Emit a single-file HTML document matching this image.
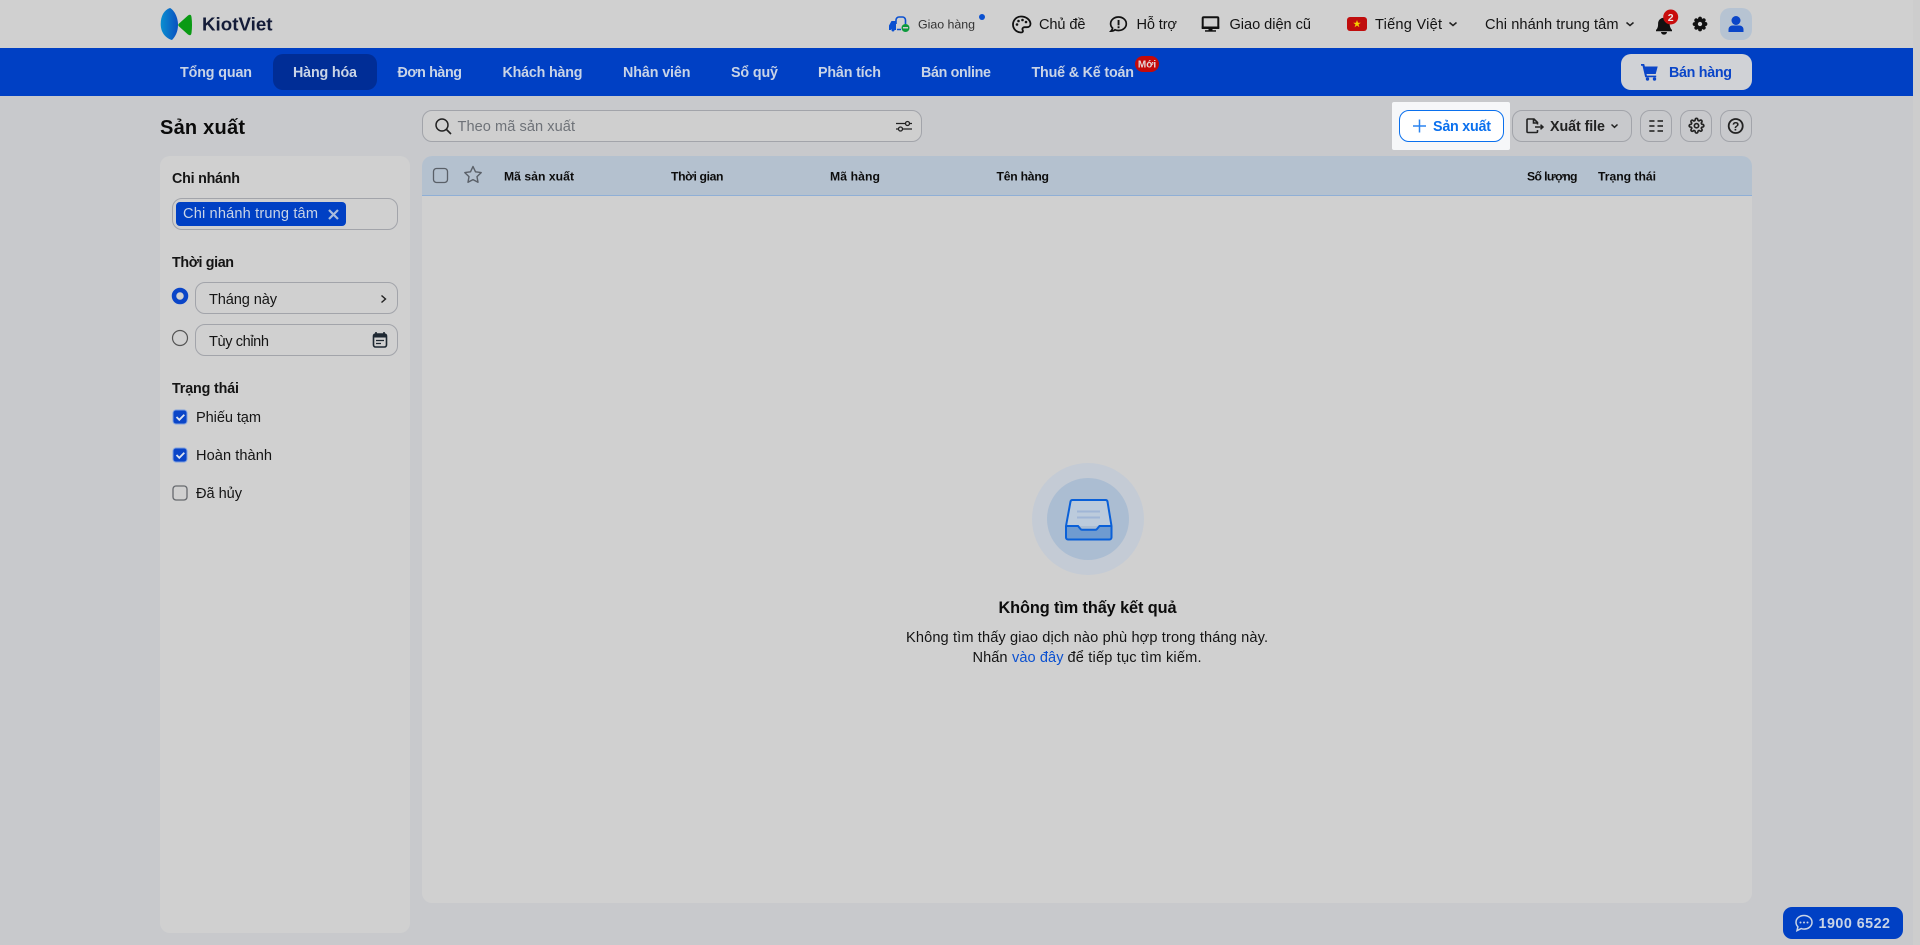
<!DOCTYPE html>
<html lang="vi">
<head>
<meta charset="utf-8">
<title>Sản xuất - KiotViet</title>
<style>
html,body{margin:0;padding:0;width:1920px;height:945px;overflow:hidden;background:#c8c9cc;}
.b{position:absolute;box-sizing:border-box;}
svg{position:absolute;left:0;top:0;}
text{font-family:"Liberation Sans",sans-serif;font-size:14.600px;fill:#141414;}
.bd{font-weight:700;font-size:14.300px;}
.nav{font-weight:700;font-size:14.300px;fill:#c9d4e6;}
.th{font-weight:700;font-size:12.200px;fill:#0c0c0c;}
.inp{border:1px solid #a2a4aa;border-radius:10px;}
.btn{border:1px solid #a2a4aa;border-radius:10px;top:110px;height:32px;}
</style>
</head>
<body>
<div class="b" style="left:0;top:0;width:1913px;height:48px;background:#d0d0d0"></div>
<div class="b" style="left:0;top:48px;width:1913px;height:48px;background:#0040c4"></div>
<div class="b" style="left:1913px;top:0;width:7px;height:945px;background:#cdcdcd"></div>
<div class="b" style="left:273px;top:54px;width:104px;height:36px;background:#002d96;border-radius:10px"></div>
<div class="b" style="left:1621px;top:54px;width:131px;height:36px;background:#d0d2d6;border-radius:10px"></div>
<div class="b" style="left:1720px;top:8px;width:32px;height:32px;background:#b6c3d2;border-radius:10px"></div>
<div class="b" style="left:1135px;top:56px;width:24px;height:16px;background:#c40a0a;border-radius:8px"></div>

<div class="b inp" style="left:422px;top:110px;width:500px;height:32px;background:#cfcfcf"></div>
<div class="b" style="left:1392px;top:102px;width:118px;height:48px;background:#f6f7f9;border-radius:2px"></div>
<div class="b" style="left:1399px;top:110px;width:105px;height:32px;background:#fff;border:1px solid #0a70ee;border-radius:10px"></div>
<div class="b btn" style="left:1512px;width:120px"></div>
<div class="b btn" style="left:1640px;width:32px"></div>
<div class="b btn" style="left:1680px;width:32px"></div>
<div class="b btn" style="left:1720px;width:32px"></div>

<div class="b" style="left:160px;top:156px;width:250px;height:777px;background:#d0d0d0;border-radius:10px"></div>
<div class="b inp" style="left:172px;top:198px;width:226px;height:32px"></div>
<div class="b" style="left:176px;top:202px;width:170px;height:24px;background:#0040c4;border-radius:4px"></div>
<div class="b inp" style="left:195px;top:282px;width:203px;height:32px"></div>
<div class="b inp" style="left:195px;top:324px;width:203px;height:32px"></div>

<div class="b" style="left:422px;top:156px;width:1330px;height:747px;background:#d0d0d0;border-radius:10px"></div>
<div class="b" style="left:422px;top:156px;width:1330px;height:40px;background:#b4c1cf;border-radius:10px 10px 0 0;border-bottom:1px solid #8fafd6"></div>

<div class="b" style="left:1032px;top:463px;width:112px;height:112px;background:#c4cbd5;border-radius:50%"></div>
<div class="b" style="left:1047px;top:478px;width:82px;height:82px;background:#abbdd2;border-radius:50%"></div>

<div class="b" style="left:1783px;top:907px;width:120px;height:32px;background:#0040c4;border-radius:9px"></div>

<svg width="1920" height="945" viewBox="0 0 1920 945" xmlns="http://www.w3.org/2000/svg">
<defs>
<linearGradient id="lg" x1="0" y1="0" x2="1" y2="0"><stop offset="0" stop-color="#0a8fd0"/><stop offset="1" stop-color="#0a50c0"/></linearGradient>
</defs>
<!-- logo -->
<path d="M170 8C174 10 178 17 178 25C178 32 175 37 172 40C165 38 160.700 32 160.700 24C160.700 16 164 10 170 8Z" fill="url(#lg)"/>
<path d="M178.500 24Q178 25 178.500 26L188 34.500Q191 36.500 191.500 33Q192.500 25 191.500 17Q191 13.500 188 15.500Z" fill="#0a9a14"/>
<text x="202" y="30.500" textLength="70.500" lengthAdjust="spacingAndGlyphs" class="bd" style="font-size:18.500px;fill:#141c38">KiotViet</text>

<!-- top utilities -->
<path d="M896 24V20a3 3 0 0 1 3-3h3.500a3 3 0 0 1 3 3v4M897 29.500h4" fill="none" stroke="#0a50d0" stroke-width="1.600"/>
<path d="M889 25.500l2.500-4.500h4.500v9h-1.500a2.200 2.200 0 0 0-3.800 0H889Z" fill="#0a50d0"/>
<circle cx="893" cy="30" r="1.500" fill="#0a50d0"/>
<circle cx="905.500" cy="28" r="4" fill="#0d9a3c"/><rect x="903" y="27" width="5" height="1.500" fill="#d0d0d0"/>
<text x="918" y="28.500" textLength="57" style="font-size:12.400px;fill:#333">Giao hàng</text>
<circle cx="982" cy="17" r="3" fill="#0a50d0"/>

<path d="M1021 16.500a8 8 0 0 0 0 16c1.800 0 2.300-1.200 1.700-2.300-.8-1.500.2-3 1.800-3h2.500c2 0 3.500-1.500 3.500-3.500C1030 19.500 1026 16.500 1021 16.500Z" fill="none" stroke="#111" stroke-width="1.800"/>
<circle cx="1017" cy="24.500" r="1.300" fill="#111"/><circle cx="1018.500" cy="21" r="1.300" fill="#111"/><circle cx="1022.500" cy="20" r="1.300" fill="#111"/><circle cx="1026" cy="22" r="1.300" fill="#111"/>
<text x="1039" y="29" textLength="46.500">Chủ đề</text>

<path d="M1118.500 17c4.500 0 7.800 3 7.800 6.700 0 3.800-3.300 6.800-7.800 6.800-1.300 0-2.500-.2-3.500-.7-1 .8-2.500 1.300-4 1.300 1-1 1.500-2 1.600-3-1.300-1.200-2-2.700-2-4.400 0-3.700 3.400-6.700 7.900-6.700Z" fill="none" stroke="#111" stroke-width="1.700"/>
<rect x="1117.600" y="20" width="1.900" height="5.300" fill="#111"/><rect x="1117.600" y="26.300" width="1.900" height="1.900" fill="#111"/>
<text x="1136.500" y="29" textLength="40.500">Hỗ trợ</text>

<rect x="1202.700" y="17.300" width="15.600" height="10.700" rx="1" fill="none" stroke="#111" stroke-width="2"/>
<rect x="1201.700" y="26.500" width="17.600" height="2.500" fill="#111"/>
<rect x="1208.500" y="28" width="4" height="3" fill="#111"/><rect x="1205" y="30.200" width="11" height="1.500" fill="#111"/>
<text x="1229.500" y="29" textLength="81.500">Giao diện cũ</text>

<rect x="1347" y="17" width="20" height="14" rx="3" fill="#c00d0d"/>
<path d="M1357 20l1 2.700h2.800l-2.300 1.700.9 2.800-2.400-1.700-2.400 1.700.9-2.800-2.300-1.700h2.800Z" fill="#f5d000"/>
<text x="1375" y="29" textLength="67">Tiếng Việt</text>
<path d="M1449.500 22.500l3.500 3 3.500-3" fill="none" stroke="#222" stroke-width="1.500"/>
<text x="1485" y="29" textLength="133.500">Chi nhánh trung tâm</text>
<path d="M1626.500 22.500l3.500 3 3.500-3" fill="none" stroke="#222" stroke-width="1.500"/>

<path d="M1656 30c1.600-1.500 2.100-3.200 2.100-6.500a5.800 5.800 0 0 1 11.600 0c0 3.300.9 5 2.300 6.500v1.200h-16Z" fill="#111"/>
<path d="M1661 32a3 2.600 0 0 0 6 0Z" fill="#111"/>
<circle cx="1670.700" cy="17" r="7.500" fill="#c80d0d"/>
<text x="1670.700" y="21" text-anchor="middle" class="bd" style="font-size:10.500px;fill:#e8e8e8">2</text>

<g transform="translate(1692.800,16.800) scale(.6)">
<path fill="#111" stroke="#111" stroke-width="2.500" d="M19.400 15a1.650 1.650 0 0 0 .33 1.820l.06.06a2 2 0 0 1 0 2.830 2 2 0 0 1-2.830 0l-.06-.06a1.650 1.650 0 0 0-1.820-.33 1.650 1.650 0 0 0-1 1.510V21a2 2 0 0 1-2 2 2 2 0 0 1-2-2v-.09A1.650 1.650 0 0 0 9 19.400a1.650 1.650 0 0 0-1.820.33l-.06.06a2 2 0 0 1-2.830 0 2 2 0 0 1 0-2.830l.06-.06a1.650 1.650 0 0 0 .33-1.820 1.650 1.650 0 0 0-1.510-1H3a2 2 0 0 1-2-2 2 2 0 0 1 2-2h.09A1.650 1.650 0 0 0 4.600 9a1.650 1.650 0 0 0-.33-1.820l-.06-.06a2 2 0 0 1 0-2.830 2 2 0 0 1 2.830 0l.06.06a1.650 1.650 0 0 0 1.820.33H9a1.650 1.650 0 0 0 1-1.510V3a2 2 0 0 1 2-2 2 2 0 0 1 2 2v.09a1.650 1.650 0 0 0 1 1.510 1.650 1.650 0 0 0 1.820-.33l.06-.06a2 2 0 0 1 2.830 0 2 2 0 0 1 0 2.830l-.06.06a1.650 1.650 0 0 0-.33 1.820V9a1.650 1.650 0 0 0 1.510 1H21a2 2 0 0 1 2 2 2 2 0 0 1-2 2h-.09a1.650 1.650 0 0 0-1.510 1z"/>
<circle cx="12" cy="12" r="3.600" fill="#d0d0d0"/>
</g>

<circle cx="1736" cy="20.500" r="4.500" fill="#0a45c8"/>
<path d="M1728.500 32v-2.500c0-2.500 2-4 4-4h7c2 0 4 1.500 4 4V32Z" fill="#0a45c8"/>

<!-- nav -->
<text x="180" y="77" textLength="72" class="nav">Tổng quan</text>
<text x="293" y="77" textLength="64" class="nav">Hàng hóa</text>
<text x="397.500" y="77" textLength="64.500" class="nav">Đơn hàng</text>
<text x="502.500" y="77" textLength="80" class="nav">Khách hàng</text>
<text x="623" y="77" textLength="67.500" class="nav">Nhân viên</text>
<text x="731" y="77" textLength="47" class="nav">Sổ quỹ</text>
<text x="818" y="77" textLength="63" class="nav">Phân tích</text>
<text x="921" y="77" textLength="70" class="nav">Bán online</text>
<text x="1031.500" y="77" textLength="102.500" class="nav">Thuế &amp; Kế toán</text>
<text x="1147" y="67.500" text-anchor="middle" class="bd" style="font-size:10px;fill:#e6d9d9">Mới</text>

<!-- bán hàng -->
<path d="M1641 64h3.200l.7 2.500h12.800l-2 7.500h-9.200l.4 1.600h9.300v1.700h-11l-2.700-11.600H1641Z" fill="#0a45c8"/>
<circle cx="1647.500" cy="79" r="1.700" fill="#0a45c8"/><circle cx="1654.500" cy="79" r="1.700" fill="#0a45c8"/>
<text x="1669" y="77" textLength="63" class="bd" style="fill:#0a45c8">Bán hàng</text>

<!-- title -->
<text x="160" y="134" textLength="85" class="bd" style="font-size:20px;fill:#0a0a0a">Sản xuất</text>

<!-- search -->
<circle cx="442" cy="125" r="6" fill="none" stroke="#222" stroke-width="1.500"/>
<path d="M446.500 129.500l4.500 4.500" stroke="#222" stroke-width="1.600"/>
<text x="457.500" y="131" textLength="117.500" style="fill:#6e7278">Theo mã sản xuất</text>
<g stroke="#222" stroke-width="1.300" fill="#cfcfcf">
<path d="M896 123.500h16M896 129h16"/>
<circle cx="907.500" cy="123.500" r="2"/><circle cx="900.500" cy="129" r="2"/>
</g>

<!-- sản xuất -->
<path d="M1419.500 119.500v13M1413 126h13" stroke="#2a84f0" stroke-width="1.500"/>
<text x="1433" y="131" textLength="58" class="bd" style="fill:#0a70ee">Sản xuất</text>

<!-- xuất file -->
<path d="M1537.500 124.500V122.500L1534 119H1528a1 1 0 0 0-1 1V131.500a1 1 0 0 0 1 1H1536.500a1 1 0 0 0 1-1V130M1533.500 119v4h4" fill="none" stroke="#222" stroke-width="1.600"/>
<path d="M1535 127h7.500M1540.500 124.700l2.500 2.300-2.500 2.300" fill="none" stroke="#222" stroke-width="1.500"/>
<text x="1550" y="131" textLength="55" class="bd" style="fill:#222">Xuất file</text>
<path d="M1611.500 124.500l3 2.800 3-2.800" fill="none" stroke="#222" stroke-width="1.500"/>

<path d="M1649.300 121h5.200M1649.300 126h5.200M1649.300 131h5.200M1657.500 121h5.500M1657.500 126h5.500M1657.500 131h5.500" stroke="#333" stroke-width="1.800"/>

<g transform="translate(1688.500,117.700) scale(.667)">
<path fill="none" stroke="#222" stroke-width="2.500" d="M19.400 15a1.650 1.650 0 0 0 .33 1.820l.06.06a2 2 0 0 1 0 2.830 2 2 0 0 1-2.830 0l-.06-.06a1.650 1.650 0 0 0-1.820-.33 1.650 1.650 0 0 0-1 1.510V21a2 2 0 0 1-2 2 2 2 0 0 1-2-2v-.09A1.650 1.650 0 0 0 9 19.400a1.650 1.650 0 0 0-1.820.33l-.06.06a2 2 0 0 1-2.830 0 2 2 0 0 1 0-2.830l.06-.06a1.650 1.650 0 0 0 .33-1.820 1.650 1.650 0 0 0-1.510-1H3a2 2 0 0 1-2-2 2 2 0 0 1 2-2h.09A1.650 1.650 0 0 0 4.600 9a1.650 1.650 0 0 0-.33-1.820l-.06-.06a2 2 0 0 1 0-2.830 2 2 0 0 1 2.830 0l.06.06a1.650 1.650 0 0 0 1.820.33H9a1.650 1.650 0 0 0 1-1.510V3a2 2 0 0 1 2-2 2 2 0 0 1 2 2v.09a1.650 1.650 0 0 0 1 1.510 1.650 1.650 0 0 0 1.820-.33l.06-.06a2 2 0 0 1 2.830 0 2 2 0 0 1 0 2.830l-.06.06a1.650 1.650 0 0 0-.33 1.820V9a1.650 1.650 0 0 0 1.510 1H21a2 2 0 0 1 2 2 2 2 0 0 1-2 2h-.09a1.650 1.650 0 0 0-1.510 1z"/>
<circle cx="12" cy="12" r="3.200" fill="none" stroke="#222" stroke-width="2.500"/>
</g>

<circle cx="1735.700" cy="126" r="7" fill="none" stroke="#222" stroke-width="1.800"/>
<text x="1735.700" y="130.300" text-anchor="middle" class="bd" style="font-size:12px;fill:#222">?</text>

<!-- sidebar -->
<text x="172" y="183" textLength="68" class="bd">Chi nhánh</text>
<text x="183" y="218" textLength="135" style="fill:#c9d4e6">Chi nhánh trung tâm</text>
<path d="M329 210l9 9M338 210l-9 9" stroke="#a9bcdc" stroke-width="2.200"/>
<text x="172" y="267" textLength="62" class="bd">Thời gian</text>
<circle cx="180" cy="296" r="6" fill="none" stroke="#0a45c8" stroke-width="4.500"/>
<text x="209" y="304" textLength="68">Tháng này</text>
<path d="M381.500 295.500l4 3.500-4 3.500" fill="none" stroke="#222" stroke-width="1.400"/>
<circle cx="180" cy="338" r="7.500" fill="none" stroke="#555" stroke-width="1.200"/>
<text x="209" y="346" textLength="60">Tùy chỉnh</text>
<rect x="373.500" y="334" width="13" height="13" rx="2" fill="none" stroke="#1e2832" stroke-width="1.600"/>
<rect x="373.500" y="334" width="13" height="3.500" fill="#1e2832"/>
<path d="M376 333.500v-1.500M384 333.500v-1.500" stroke="#1e2832" stroke-width="1.600"/>
<path d="M376 340.500h8M376 343.500h5" stroke="#1e2832" stroke-width="1.300"/>

<text x="172" y="393" textLength="67" class="bd">Trạng thái</text>
<rect x="173" y="410" width="14" height="14" rx="3" fill="#0a45c8" stroke="#7ea0e0" stroke-width="1"/>
<path d="M176.500 417l2.800 2.800 5-5" fill="none" stroke="#dde4f0" stroke-width="1.800"/>
<text x="196" y="422" textLength="65">Phiếu tạm</text>
<rect x="173" y="448" width="14" height="14" rx="3" fill="#0a45c8" stroke="#7ea0e0" stroke-width="1"/>
<path d="M176.500 455l2.800 2.800 5-5" fill="none" stroke="#dde4f0" stroke-width="1.800"/>
<text x="196" y="460" textLength="76">Hoàn thành</text>
<rect x="173" y="486" width="14" height="14" rx="3" fill="none" stroke="#66696e" stroke-width="1.300"/>
<text x="196" y="498" textLength="46">Đã hủy</text>

<!-- table head -->
<rect x="433.500" y="168.500" width="14" height="14" rx="3" fill="none" stroke="#5a6068" stroke-width="1.300"/>
<path d="M473 166.500l2.500 5.300 5.700.8-4.200 4 1 5.700-5-2.700-5 2.700 1-5.700-4.200-4 5.700-.8Z" fill="none" stroke="#5a6068" stroke-width="1.400" stroke-linejoin="round"/>
<text x="504" y="180.500" textLength="70" class="th">Mã sản xuất</text>
<text x="671" y="180.500" textLength="52.500" class="th">Thời gian</text>
<text x="830" y="180.500" textLength="50" class="th">Mã hàng</text>
<text x="996.500" y="180.500" textLength="52.500" class="th">Tên hàng</text>
<text x="1527" y="180.500" textLength="50.500" class="th">Số lượng</text>
<text x="1598" y="180.500" textLength="58" class="th">Trạng thái</text>

<!-- empty state -->
<path d="M1072.500 500h33a2 2 0 0 1 2 1.600l3.700 24.400H1066.300l4.200-24.400a2 2 0 0 1 2-1.600Z" fill="#bccbdc"/>
<path d="M1066 526h12l2.500 3a2 2 0 0 0 1.500.8h13.500a2 2 0 0 0 1.500-.8l2.500-3h12v11.500a2 2 0 0 1-2 2h-41.500a2 2 0 0 1-2-2Z" fill="#6f9bd0"/>
<path d="M1072.500 500h33a2 2 0 0 1 2 1.600l4 24.400v11.500a2 2 0 0 1-2 2H1068a2 2 0 0 1-2-2V526l4.500-24.400a2 2 0 0 1 2-1.600Z" fill="none" stroke="#0a60d8" stroke-width="2" stroke-linejoin="round"/>
<path d="M1066 526h12l2.500 3a2 2 0 0 0 1.500.8h13.500a2 2 0 0 0 1.500-.8l2.500-3h12" fill="none" stroke="#0a60d8" stroke-width="2"/>
<path d="M1077 511.500h23M1077 517.500h23" stroke="#a0b6d6" stroke-width="2"/>

<text x="998.500" y="613" textLength="178" class="bd" style="font-size:16.300px;fill:#0c0c0c">Không tìm thấy kết quả</text>
<text x="906" y="642" textLength="362">Không tìm thấy giao dịch nào phù hợp trong tháng này.</text>
<text x="972.500" y="662" textLength="35">Nhấn</text>
<text x="1012" y="662" textLength="51.500" style="fill:#0a50d0">vào đây</text>
<text x="1067.500" y="662" textLength="134">để tiếp tục tìm kiếm.</text>

<!-- phone -->
<path d="M1804 915.500c4.500 0 8 3 8 6.800s-3.500 6.800-8 6.800c-1 0-2-.1-2.800-.5l-4.200 2 .9-3.800c-1.200-1.200-1.900-2.800-1.900-4.500 0-3.800 3.500-6.800 8-6.800Z" fill="none" stroke="#c9d4e6" stroke-width="1.500"/>
<circle cx="1800.500" cy="922.500" r="1" fill="#c9d4e6"/><circle cx="1804" cy="922.500" r="1" fill="#c9d4e6"/><circle cx="1807.500" cy="922.500" r="1" fill="#c9d4e6"/>
<text x="1818.500" y="928" textLength="71.500" class="bd" style="fill:#c9d4e6">1900 6522</text>
</svg>
</body>
</html>
